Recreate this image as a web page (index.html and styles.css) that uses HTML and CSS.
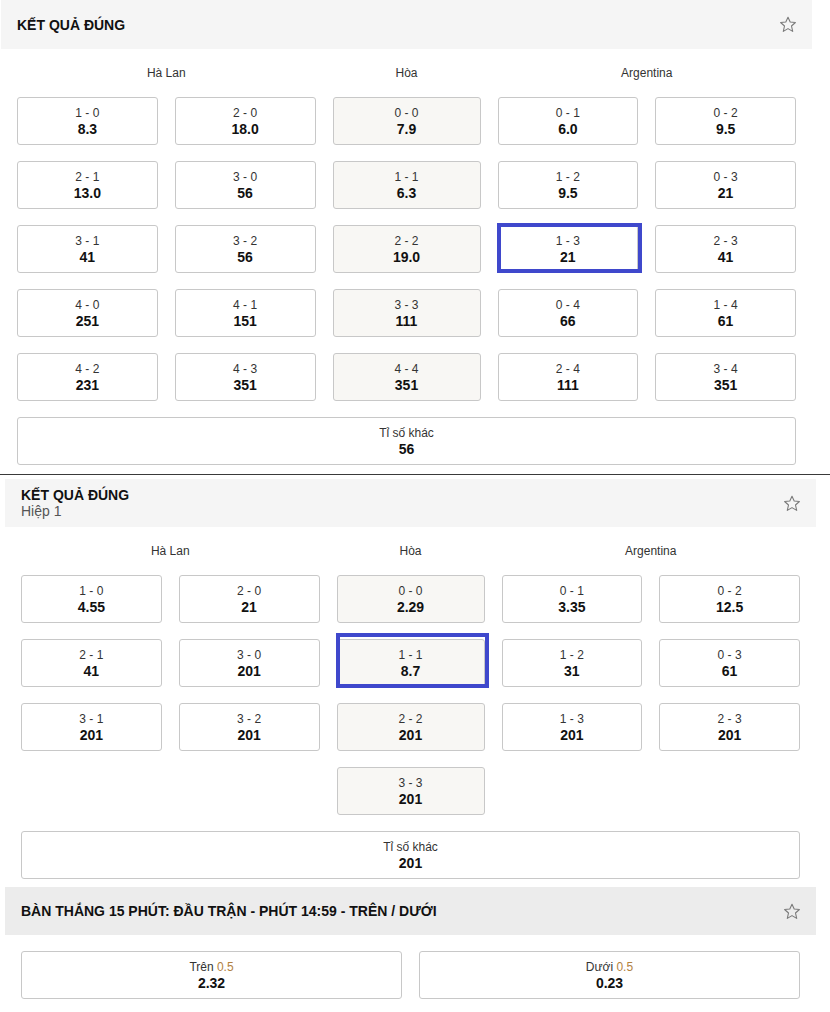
FILE: index.html
```html
<!DOCTYPE html>
<html lang="vi">
<head>
<meta charset="utf-8">
<title>Kết quả đúng</title>
<link rel="stylesheet" href="styles.css">
</head>
<body>
<div class="page">
  <section class="market m1">
    <div class="mhead">
      <div class="mtitle"><div class="t">KẾT QUẢ ĐÚNG</div></div>
      <svg class="star" width="18" height="17" viewBox="0 0 18 17"><path d="M9 1.2 L11.2 6 L16.4 6.5 L12.5 10 L13.7 15.4 L9 12.6 L4.3 15.4 L5.5 10 L1.6 6.5 L6.8 6 Z" fill="none" stroke="#7a7a7a" stroke-width="1.1" stroke-linejoin="round"/></svg>
    </div>
    <div class="grid">
      <div class="lbl two">Hà Lan</div><div class="lbl">Hòa</div><div class="lbl two">Argentina</div>
      <div class="cell"><span class="s">1 - 0</span><b>8.3</b></div>
      <div class="cell"><span class="s">2 - 0</span><b>18.0</b></div>
      <div class="cell draw"><span class="s">0 - 0</span><b>7.9</b></div>
      <div class="cell"><span class="s">0 - 1</span><b>6.0</b></div>
      <div class="cell"><span class="s">0 - 2</span><b>9.5</b></div>

      <div class="cell"><span class="s">2 - 1</span><b>13.0</b></div>
      <div class="cell"><span class="s">3 - 0</span><b>56</b></div>
      <div class="cell draw"><span class="s">1 - 1</span><b>6.3</b></div>
      <div class="cell"><span class="s">1 - 2</span><b>9.5</b></div>
      <div class="cell"><span class="s">0 - 3</span><b>21</b></div>

      <div class="cell"><span class="s">3 - 1</span><b>41</b></div>
      <div class="cell"><span class="s">3 - 2</span><b>56</b></div>
      <div class="cell draw"><span class="s">2 - 2</span><b>19.0</b></div>
      <div class="cell"><span class="s">1 - 3</span><b>21</b><i class="mark mark-a"></i></div>
      <div class="cell"><span class="s">2 - 3</span><b>41</b></div>

      <div class="cell"><span class="s">4 - 0</span><b>251</b></div>
      <div class="cell"><span class="s">4 - 1</span><b>151</b></div>
      <div class="cell draw"><span class="s">3 - 3</span><b>111</b></div>
      <div class="cell"><span class="s">0 - 4</span><b>66</b></div>
      <div class="cell"><span class="s">1 - 4</span><b>61</b></div>

      <div class="cell"><span class="s">4 - 2</span><b>231</b></div>
      <div class="cell"><span class="s">4 - 3</span><b>351</b></div>
      <div class="cell draw"><span class="s">4 - 4</span><b>351</b></div>
      <div class="cell"><span class="s">2 - 4</span><b>111</b></div>
      <div class="cell"><span class="s">3 - 4</span><b>351</b></div>

      <div class="cell full"><span class="s">Tỉ số khác</span><b>56</b></div>
    </div>
  </section>

  <hr class="divider">

  <section class="market m2">
    <div class="mhead tall">
      <div class="mtitle"><div class="t">KẾT QUẢ ĐÚNG</div><div class="sub">Hiệp 1</div></div>
      <svg class="star" width="18" height="17" viewBox="0 0 18 17"><path d="M9 1.2 L11.2 6 L16.4 6.5 L12.5 10 L13.7 15.4 L9 12.6 L4.3 15.4 L5.5 10 L1.6 6.5 L6.8 6 Z" fill="none" stroke="#7a7a7a" stroke-width="1.1" stroke-linejoin="round"/></svg>
    </div>
    <div class="grid">
      <div class="lbl two">Hà Lan</div><div class="lbl">Hòa</div><div class="lbl two">Argentina</div>
      <div class="cell"><span class="s">1 - 0</span><b>4.55</b></div>
      <div class="cell"><span class="s">2 - 0</span><b>21</b></div>
      <div class="cell draw"><span class="s">0 - 0</span><b>2.29</b></div>
      <div class="cell"><span class="s">0 - 1</span><b>3.35</b></div>
      <div class="cell"><span class="s">0 - 2</span><b>12.5</b></div>

      <div class="cell"><span class="s">2 - 1</span><b>41</b></div>
      <div class="cell"><span class="s">3 - 0</span><b>201</b></div>
      <div class="cell draw"><span class="s">1 - 1</span><b>8.7</b><i class="mark mark-b"></i></div>
      <div class="cell"><span class="s">1 - 2</span><b>31</b></div>
      <div class="cell"><span class="s">0 - 3</span><b>61</b></div>

      <div class="cell"><span class="s">3 - 1</span><b>201</b></div>
      <div class="cell"><span class="s">3 - 2</span><b>201</b></div>
      <div class="cell draw"><span class="s">2 - 2</span><b>201</b></div>
      <div class="cell"><span class="s">1 - 3</span><b>201</b></div>
      <div class="cell"><span class="s">2 - 3</span><b>201</b></div>

      <div class="cell draw only"><span class="s">3 - 3</span><b>201</b></div>

      <div class="cell full"><span class="s">Tỉ số khác</span><b>201</b></div>
    </div>

    <div class="mhead dark">
      <div class="mtitle"><div class="t">BÀN THẮNG 15 PHÚT: ĐẦU TRẬN - PHÚT 14:59 - TRÊN / DƯỚI</div></div>
      <svg class="star" width="18" height="17" viewBox="0 0 18 17"><path d="M9 1.2 L11.2 6 L16.4 6.5 L12.5 10 L13.7 15.4 L9 12.6 L4.3 15.4 L5.5 10 L1.6 6.5 L6.8 6 Z" fill="none" stroke="#7a7a7a" stroke-width="1.1" stroke-linejoin="round"/></svg>
    </div>
    <div class="ou">
      <div class="cell"><span class="s">Trên <em>0.5</em></span><b>2.32</b></div>
      <div class="cell"><span class="s">Dưới <em>0.5</em></span><b>0.23</b></div>
    </div>
  </section>
</div>
</body>
</html>
```

FILE: styles.css
```css
* { box-sizing: border-box; }

body {
  margin: 0;
  background: #ffffff;
  font-family: "Liberation Sans", Arial, sans-serif;
  color: #111;
}

.page {
  width: 830px;
}

.market {
  width: 811px;
}

.m1 { margin-left: 1px; }
.m2 { margin-left: 5px; }

.mhead {
  height: 49px;
  background: #f5f5f5;
  display: flex;
  align-items: center;
  justify-content: space-between;
  padding: 0 15px 0 16px;
}

.mhead.tall {
  height: 48px;
}

.mhead.dark {
  height: 48px;
  background: #ececec;
  margin-top: 8px;
}

.mtitle .t {
  font-size: 14px;
  font-weight: bold;
  line-height: 16px;
  color: #111;
}

.mtitle .sub {
  font-size: 14px;
  line-height: 16px;
  color: #555;
}

.star {
  display: block;
}

.grid {
  display: grid;
  grid-template-columns: 1fr 1fr 148px 1fr 1fr;
  column-gap: 17px;
  row-gap: 16px;
  padding: 16px 16px 0 16px;
}

.lbl {
  text-align: center;
  font-size: 12px;
  line-height: 14px;
  color: #333;
  margin-top: 1px;
  margin-bottom: 1px;
}

.lbl.two {
  grid-column: span 2;
}

.cell {
  position: relative;
  height: 48px;
  border: 1px solid #c8c8c8;
  border-radius: 3px;
  background: #fff;
  display: flex;
  flex-direction: column;
  align-items: center;
  justify-content: center;
}

.cell.draw {
  background: #f8f7f4;
}

.cell.only {
  grid-column: 3;
}

.cell.full {
  grid-column: 1 / -1;
}

.cell .s {
  font-size: 12px;
  line-height: 16px;
  color: #333;
}

.cell .s em {
  font-style: normal;
  color: #b2823f;
}

.cell b {
  font-size: 14px;
  line-height: 16px;
  font-weight: bold;
  color: #111;
}

.mark {
  position: absolute;
  border: 4px solid #3f48cc;
  pointer-events: none;
}

.mark-a {
  top: -3px;
  left: -2px;
  right: -5px;
  bottom: -1px;
}

.mark-b {
  top: -7px;
  left: -2px;
  right: -5px;
  bottom: -2px;
}

.divider {
  border: 0;
  border-top: 1px solid #3a3a3a;
  margin: 9px 0 4px 0;
  height: 0;
}

.ou {
  display: grid;
  grid-template-columns: 1fr 1fr;
  column-gap: 17px;
  padding: 16px 16px 0 16px;
}

.ou .cell {
  height: 48px;
}
```
